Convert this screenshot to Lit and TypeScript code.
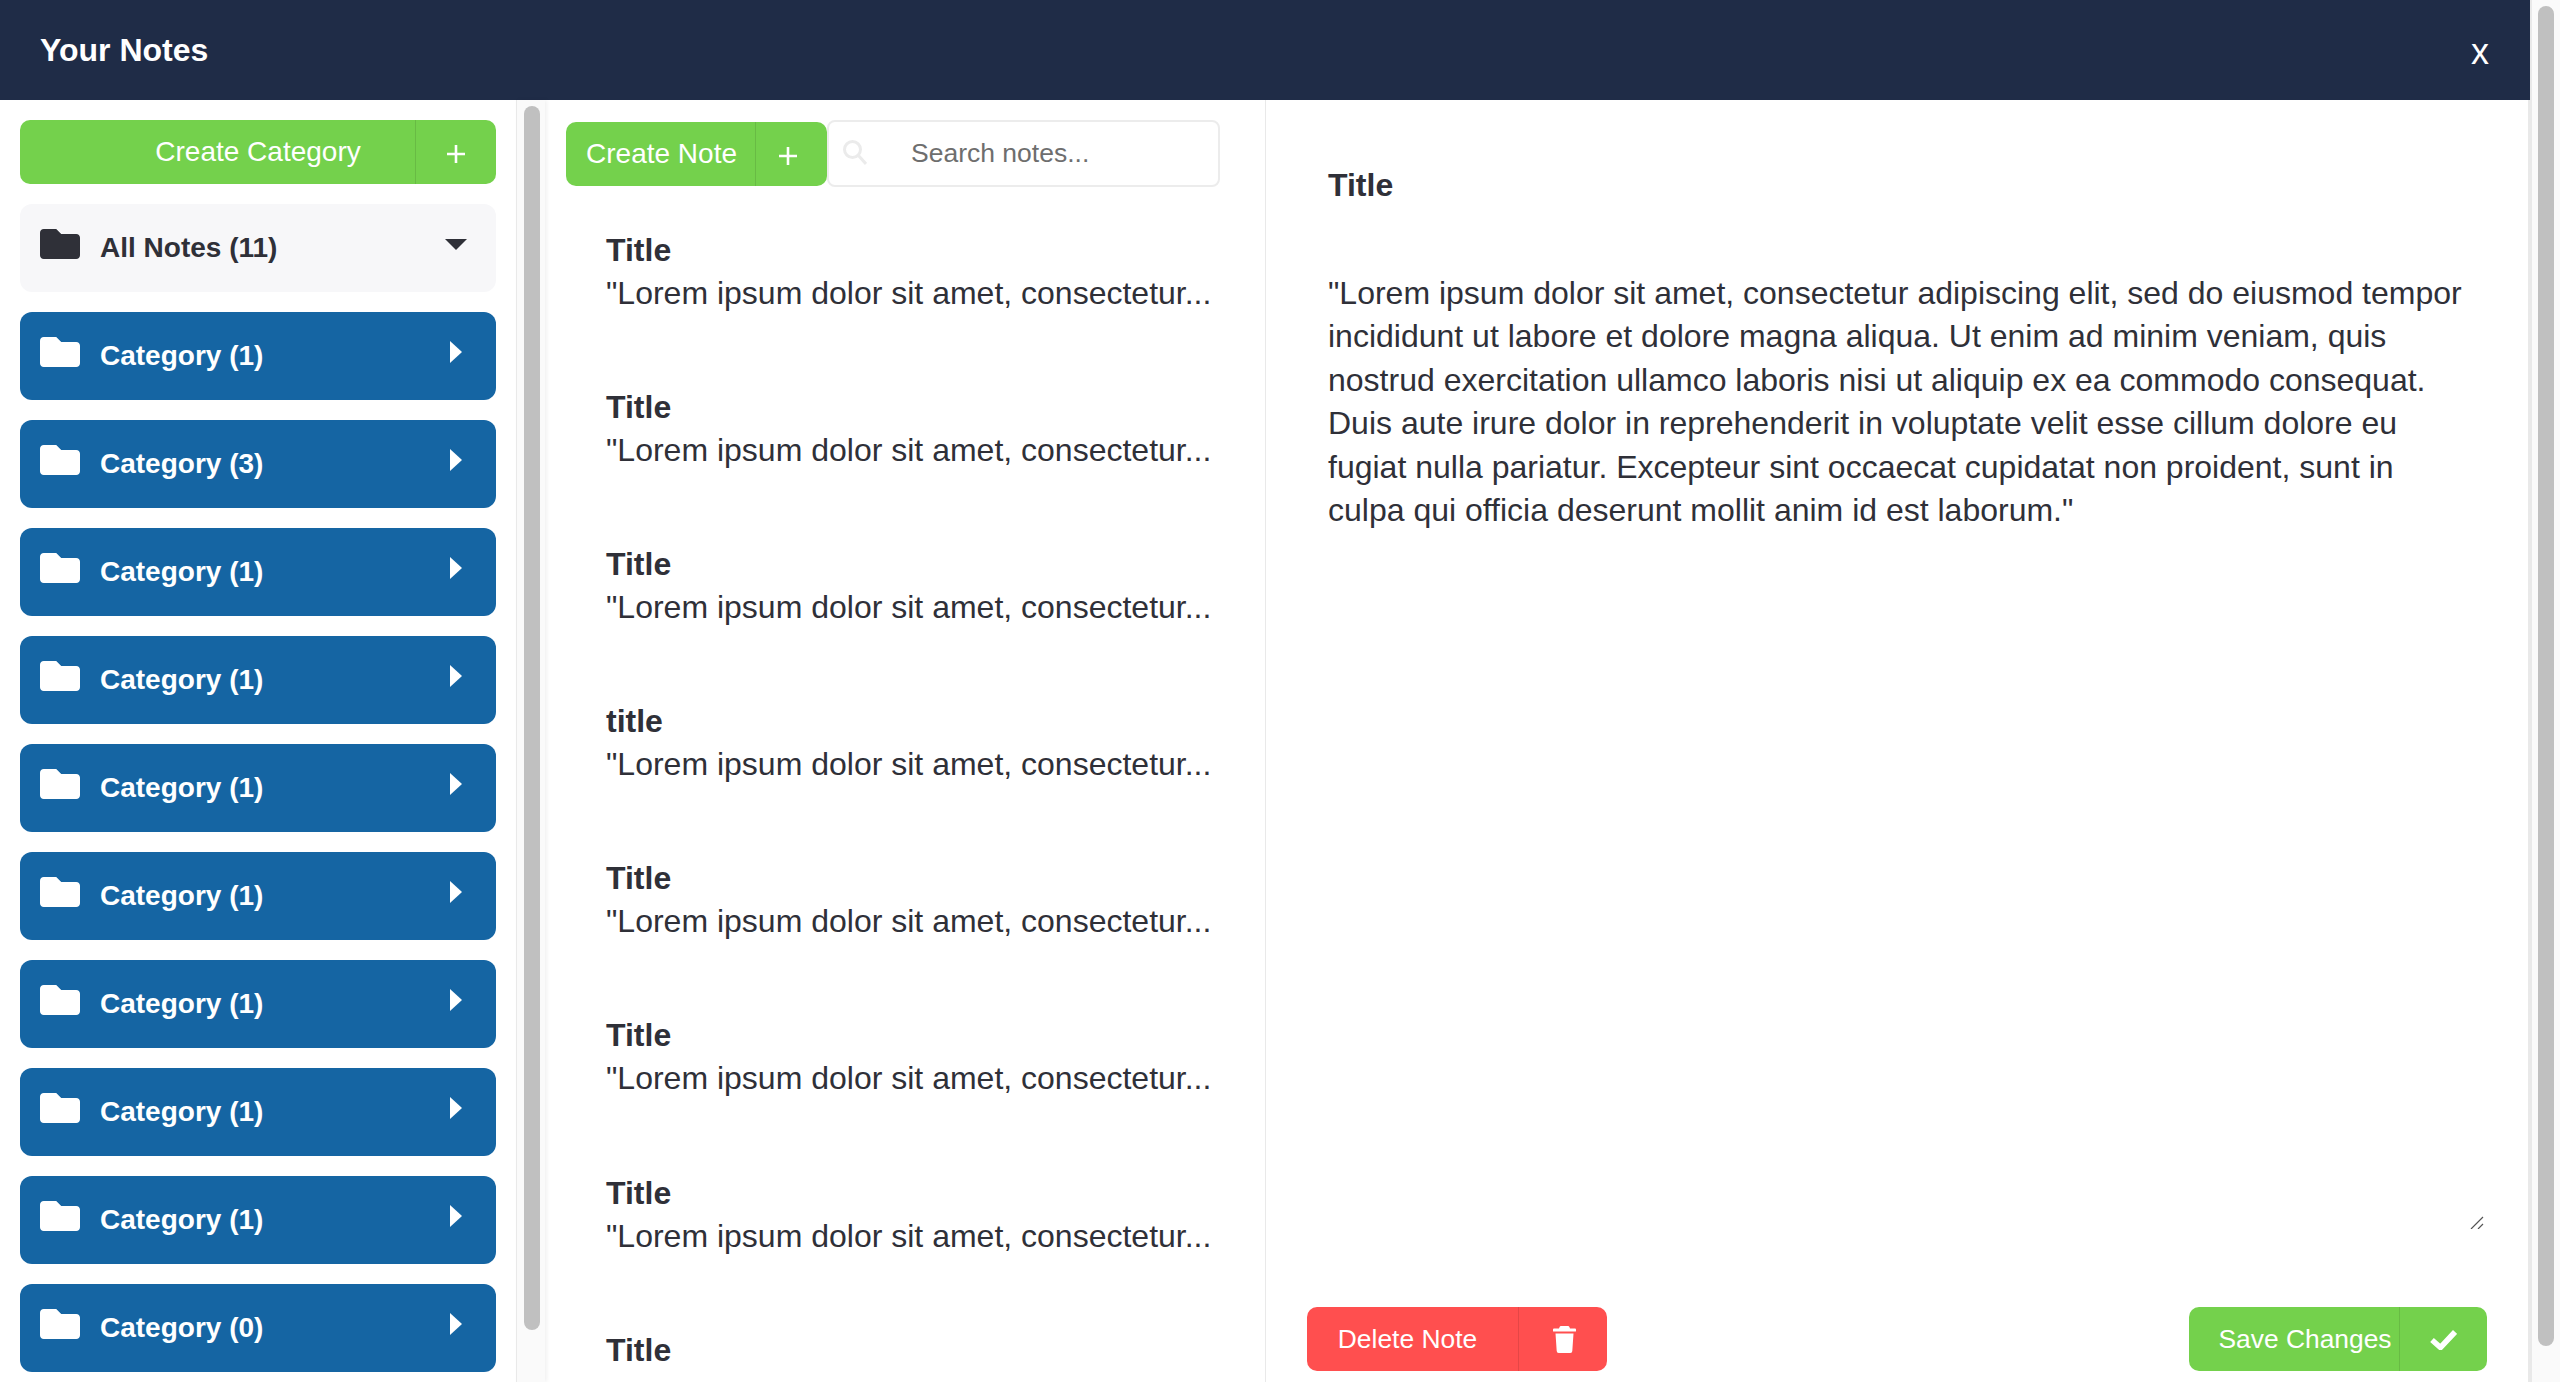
import { LitElement, html, css, svg } from "lit";
import { customElement } from "lit/decorators.js";

const folder = svg`<path d="M464 128H272l-64-64H48C21.49 64 0 85.49 0 112v288c0 26.51 21.49 48 48 48h416c26.51 0 48-21.49 48-48V176c0-26.51-21.49-48-48-48z"/>`;
const trash = svg`<path d="M8 0h7a1.5 1.5 0 0 1 1.4 1L17 2.5h5a1 1 0 0 1 1 1V5a.6.6 0 0 1-.6.6H.6A.6.6 0 0 1 0 5V3.500a1 1 0 0 1 1-1h5L6.600 1A1.500 1.500 0 0 1 8 0z"/><path d="M2.500 7.500h18L19.300 25a2 2 0 0 1-2 2H5.700a2 2 0 0 1-2-2z"/>`;
const search = svg`<circle cx="9.500" cy="9.500" r="8" fill="none" stroke="currentColor" stroke-width="3"/><path d="M15 15L23 24" fill="none" stroke="currentColor" stroke-width="3"/>`;

const categories = [1, 3, 1, 1, 1, 1, 1, 1, 1, 0];
const notes = ["Title", "Title", "Title", "title", "Title", "Title", "Title"];
const snippet = '"Lorem ipsum dolor sit amet, consectetur...';
const body =
  '"Lorem ipsum dolor sit amet, consectetur adipiscing elit, sed do eiusmod tempor incididunt ut labore et dolore magna aliqua. Ut enim ad minim veniam, quis nostrud exercitation ullamco laboris nisi ut aliquip ex ea commodo consequat. Duis aute irure dolor in reprehenderit in voluptate velit esse cillum dolore eu fugiat nulla pariatur. Excepteur sint occaecat cupidatat non proident, sunt in culpa qui officia deserunt mollit anim id est laborum."';

@customElement("app-root")
export class AppRoot extends LitElement {
  static styles = css`
    :host {
      display: flex;
      width: 2560px;
      height: 1382px;
      overflow: hidden;
      background: #fff;
      font-family: "Liberation Sans", Arial, sans-serif;
      color: #2f3038;
    }
    * {
      box-sizing: border-box;
    }
    .modal {
      width: 2530px;
      display: flex;
      flex-direction: column;
    }
    .page-track {
      width: 30px;
      background: #fafafa;
      border-left: 2px solid #e9e9e9;
      padding: 6px 6px 0;
    }
    .page-thumb {
      height: 1340px;
      background: #c0c0c0;
      border-radius: 8px;
    }
    header {
      height: 100px;
      flex: none;
      background: #1f2c47;
      color: #fff;
      display: flex;
      align-items: center;
      justify-content: space-between;
      padding: 0 41px 0 40px;
    }
    h1 {
      margin: 0;
      font-size: 32px;
      font-weight: 700;
    }
    .close {
      font-size: 36px;
      padding-top: 4px;
    }
    .panes {
      flex: 1;
      min-height: 0;
      display: flex;
    }
    .categories {
      width: 516px;
      flex: none;
      padding: 20px;
      display: flex;
      flex-direction: column;
      gap: 20px;
      overflow: hidden;
      border-top-left-radius: 12px;
    }
    .track {
      width: 29px;
      flex: none;
      padding: 6px 5px 0 7px;
      background: #fafafa;
      border-left: 1px solid #e9e9e9;
      box-shadow: 2px 0 4px rgba(0, 0, 0, 0.06);
    }
    .thumb {
      height: 1224px;
      background: #c0c0c0;
      border-radius: 8px;
    }
    .btn {
      display: flex;
      height: 64px;
      flex: none;
      border-radius: 10px;
      color: #fff;
      font-size: 28px;
      overflow: hidden;
    }
    .green {
      background: #74d14c;
    }
    .red {
      background: #ff4f4f;
    }
    .btn .label {
      flex: 1;
      display: flex;
      align-items: center;
      justify-content: center;
      white-space: nowrap;
    }
    .btn .icon {
      flex: none;
      display: flex;
      align-items: center;
      justify-content: center;
      border-left: 1px solid rgba(0, 0, 0, 0.1);
    }
    .create-cat .icon {
      width: 81px;
    }
    .create-cat .label {
      padding-left: 81px;
    }
    .plus {
      width: 18px;
      height: 18px;
      margin-top: 4px;
      stroke: #fff;
      stroke-width: 2.6;
    }
    .cat {
      height: 88px;
      flex: none;
      border-radius: 12px;
      display: flex;
      align-items: center;
      padding: 0 34px 0 20px;
      font-size: 28px;
      font-weight: 700;
      background: #1565a3;
      color: #fff;
    }
    .cat.all {
      background: #f7f7f9;
      color: #2f3038;
    }
    .cat .folder {
      width: 40px;
      height: 40px;
      fill: currentColor;
      margin: -8px 20px 0 0;
      flex: none;
    }
    .cat .name {
      flex: 1;
    }
    .right {
      width: 0;
      height: 0;
      margin-top: -8px;
      border-left: 12px solid #fff;
      border-top: 11px solid transparent;
      border-bottom: 11px solid transparent;
    }
    .down {
      width: 0;
      height: 0;
      margin: -8px -5px 0 0;
      border-top: 11px solid #2f3038;
      border-left: 11px solid transparent;
      border-right: 11px solid transparent;
    }
    .list {
      width: 721px;
      flex: none;
      border-right: 1px solid #e9e9e9;
      padding: 20px 0 0 21px;
      overflow: hidden;
    }
    .toolbar {
      display: flex;
      align-items: center;
      margin-bottom: 42px;
      height: 67px;
    }
    .create-note {
      width: 261px;
    }
    .create-note .label {
      width: 189px;
      flex: none;
      padding-left: 2px;
    }
    .create-note .icon {
      flex: 1;
      padding-right: 8px;
    }
    .search {
      width: 393px;
      height: 67px;
      border: 2px solid #ececec;
      border-radius: 8px;
      display: flex;
      align-items: center;
      padding-left: 14px;
      font-size: 26.5px;
      color: #6e6e6e;
    }
    .search svg {
      width: 24px;
      height: 25px;
      color: #ebebeb;
      margin: -2px 44px 0 0;
      flex: none;
    }
    .note {
      padding-left: 40px;
      font-size: 32px;
      line-height: 43px;
      height: 157.1px;
      white-space: nowrap;
    }
    .note b {
      display: block;
    }
    .editor {
      flex: 1;
      min-width: 0;
      display: flex;
      flex-direction: column;
      padding: 0 41px 11px 41px;
      border-right: 2px solid #e9e9e9;
      position: relative;
    }
    .editor h2 {
      margin: 0;
      padding: 64px 0 0 21px;
      font-size: 32px;
      line-height: 43px;
      font-weight: 700;
    }
    .editor p {
      flex: 1;
      margin: 0;
      padding: 65px 20px 0 21px;
      font-size: 32px;
      line-height: 43.4px;
    }
    .grip {
      position: absolute;
      right: 44px;
      bottom: 153px;
      width: 14px;
      height: 13px;
    }
    .actions {
      display: flex;
      justify-content: space-between;
    }
    .actions .btn {
      font-size: 26.4px;
    }
    .delete {
      width: 300px;
    }
    .delete .label {
      padding-right: 10px;
    }
    .delete .icon {
      width: 89px;
      padding-left: 2px;
    }
    .delete svg {
      width: 23px;
      height: 27px;
      fill: #fff;
    }
    .save {
      width: 298px;
    }
    .save .label {
      padding-left: 22px;
    }
    .save .icon {
      width: 88px;
    }
    .save svg {
      width: 27px;
      height: 20px;
      fill: none;
      stroke: #fff;
      stroke-width: 5.5;
      margin-top: 1px;
    }
  `;

  render() {
    return html`
      <div class="modal">
        <header><h1>Your Notes</h1><span class="close">x</span></header>
        <div class="panes">
          <div class="categories">
            <div class="btn green create-cat">
              <span class="label">Create Category</span>
              <span class="icon">${this.plus()}</span>
            </div>
            <div class="cat all">
              <svg class="folder" viewBox="0 0 512 512">${folder}</svg>
              <span class="name">All Notes (11)</span>
              <span class="down"></span>
            </div>
            ${categories.map(
              (n) => html`<div class="cat">
                <svg class="folder" viewBox="0 0 512 512">${folder}</svg>
                <span class="name">Category (${n})</span>
                <span class="right"></span>
              </div>`
            )}
          </div>
          <div class="track"><div class="thumb"></div></div>
          <div class="list">
            <div class="toolbar">
              <div class="btn green create-note">
                <span class="label">Create Note</span>
                <span class="icon">${this.plus()}</span>
              </div>
              <div class="search">
                <svg viewBox="0 0 24 25">${search}</svg>
                Search notes...
              </div>
            </div>
            ${notes.map((t) => html`<div class="note"><b>${t}</b>${snippet}</div>`)}
            <div class="note"><b>Title</b></div>
          </div>
          <div class="editor">
            <h2>Title</h2>
            <p>${body}</p>
            <svg class="grip" viewBox="0 0 14 13">
              <path d="M1 13L13 1M8 13L13 8" stroke="#555" stroke-width="1.2" fill="none" />
            </svg>
            <div class="actions">
              <div class="btn red delete">
                <span class="label">Delete Note</span>
                <span class="icon"><svg viewBox="0 0 23 27">${trash}</svg></span>
              </div>
              <div class="btn green save">
                <span class="label">Save Changes</span>
                <span class="icon"><svg viewBox="0 0 27 20"><path d="M2 10L10.500 17.500L25 2" /></svg></span>
              </div>
            </div>
          </div>
        </div>
      </div>
      <div class="page-track"><div class="page-thumb"></div></div>
    `;
  }

  plus() {
    return html`<svg class="plus" viewBox="0 0 18 18"><path d="M9 0V18M0 9H18" fill="none" /></svg>`;
  }
}
